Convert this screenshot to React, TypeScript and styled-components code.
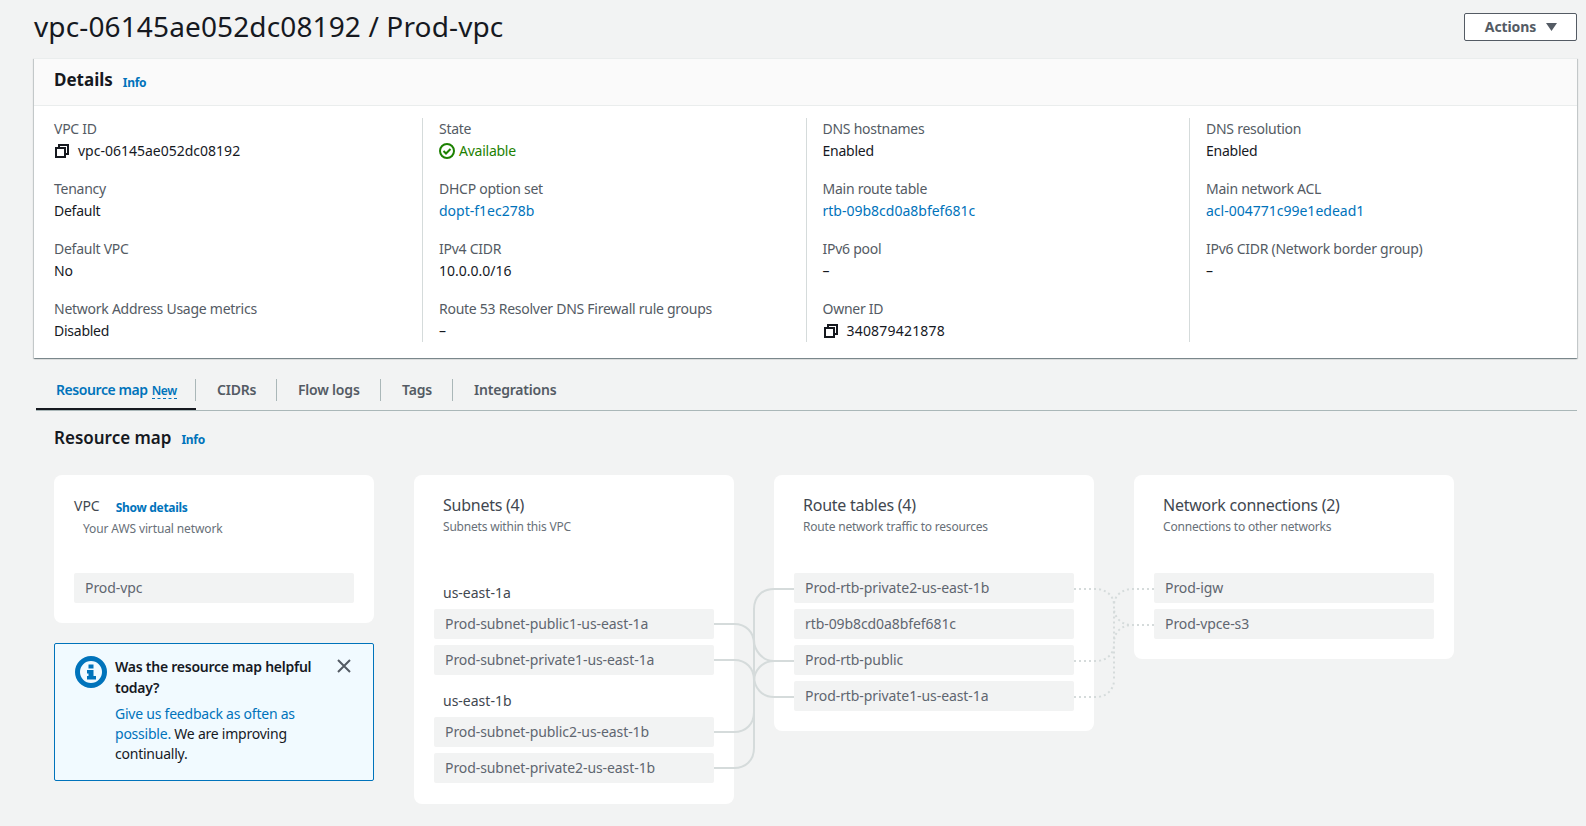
import React from "react";
import styled, { createGlobalStyle } from "styled-components";

const Global = createGlobalStyle`
  html, body { margin: 0; padding: 0; background: #f2f3f3; }
  body { font-family: "Noto Sans", "Open Sans", sans-serif; font-size: 14px; line-height: 22px; color: #16191f; overflow: hidden; }
  * { box-sizing: border-box; }
`;

const Page = styled.div`
  width: 1586px;
  height: 826px;
  padding: 0 9px 0 34px;
  overflow: hidden;
`;
const TopBar = styled.header`
  height: 58px;
  padding-top: 13px;
  display: flex;
  justify-content: space-between;
  align-items: flex-start;
`;
const Title = styled.h1`
  margin: -1px 0 0;
  font-size: 28px;
  line-height: 28px;
  font-weight: 400;
  letter-spacing: 0.13px;
  color: #16191f;
`;
const ActionButton = styled.button`
  width: 113px;
  height: 28px;
  padding: 0 0 0 1px;
  background: #fff;
  border: 1px solid #545b64;
  border-radius: 2px;
  color: #545b64;
  font: 700 14px/20px "Noto Sans", sans-serif;
  letter-spacing: -0.1px;
  display: flex;
  align-items: center;
  justify-content: center;
  gap: 10px;
`;
const Panel = styled.section`
  background: #fff;
  box-shadow: 0 1px 1px 0 rgba(0, 28, 36, 0.3), 1px 1px 1px 0 rgba(0, 28, 36, 0.15), -1px 1px 1px 0 rgba(0, 28, 36, 0.15);
  border-top: 1px solid #eaeded;
`;
const PanelHead = styled.div`
  height: 47px;
  padding: 0 20px;
  background: #fafafa;
  border-bottom: 1px solid #eaeded;
  display: flex;
  align-items: center;
  gap: 10px;
`;
const PanelTitle = styled.h2`
  margin: 0 0 5px;
  font-size: 17px;
  line-height: 22px;
  font-weight: 700;
`;
const Info = styled.a`
  font-size: 12px;
  font-weight: 700;
  line-height: 16px;
  letter-spacing: -0.3px;
  color: #0073bb;
  position: relative;
  top: 1px;
`;
const MapInfo = styled(Info)`
  top: 2px;
`;
const PanelBody = styled.div`
  padding: 12px 0 16px 20px;
  display: grid;
  grid-template-columns: 368px 383.5px 383.5px 1fr;
`;
const Column = styled.div<{ $first?: boolean }>`
  padding-left: ${(p) => (p.$first ? 0 : 16)}px;
  border-left: ${(p) => (p.$first ? "none" : "1px solid #d5dbdb")};
  display: flex;
  flex-direction: column;
  gap: 16px;
`;
const Pair = styled.div`
  height: 44px;
`;
const Label = styled.div`
  color: #545b64;
  height: 22px;
  letter-spacing: -0.26px;
  white-space: nowrap;
`;
const Value = styled.div`
  height: 22px;
  display: flex;
  align-items: center;
  gap: 8px;
  white-space: nowrap;
`;
const Word = styled.span`
  letter-spacing: -0.25px;
`;
const Digits = styled.span`
  letter-spacing: 0.2px;
`;
const Link = styled.a`
  color: #0073bb;
`;
const Status = styled.span`
  color: #1d8102;
  display: flex;
  align-items: center;
  gap: 4px;
  letter-spacing: -0.25px;
`;
const Tabs = styled.nav`
  margin: 14px 0 0 2px;
  height: 39px;
  border-bottom: 1px solid #aab7b8;
  display: flex;
  align-items: flex-start;
`;
const Tab = styled.div<{ $active?: boolean; $last?: boolean; $w: number }>`
  position: relative;
  flex: none;
  width: ${(p) => p.$w}px;
  height: 38px;
  padding: 7px 0 0 ${(p) => (p.$active ? 20 : 21)}px;
  font-weight: 600;
  letter-spacing: ${(p) => (p.$active ? -0.42 : -0.2)}px;
  color: ${(p) => (p.$active ? "#0073bb" : "#545b64")};
  white-space: nowrap;
  display: flex;
  gap: 4px;
  &::after {
    content: "";
    display: ${(p) => (p.$last ? "none" : "block")};
    position: absolute;
    right: 0;
    top: 7px;
    height: 22px;
    width: 1px;
    background: #aab7b8;
  }
  ${(p) => (p.$active ? "border-bottom: 2px solid #16191f;" : "")}
`;
const NewTag = styled.span`
  font-size: 12px;
  line-height: 16px;
  height: 16px;
  margin-top: 4px;
  border-bottom: 1px dashed #0073bb;
  color: #0073bb;
`;
const MapHead = styled.div`
  margin: 16px 0 0 20px;
  height: 22px;
  display: flex;
  align-items: center;
  gap: 10px;
`;
const MapTitle = styled.h2`
  margin: 0;
  font-size: 17px;
  line-height: 22px;
  font-weight: 600;
`;
const MapArea = styled.div`
  position: relative;
  margin: 26px 0 0 20px;
  display: flex;
  align-items: flex-start;
  gap: 40px;
`;
const Stack = styled.div`
  width: 320px;
  display: flex;
  flex-direction: column;
  gap: 20px;
`;
const Card = styled.div<{ $h: number }>`
  width: 320px;
  height: ${(p) => p.$h}px;
  padding: 98px 20px 0;
  background: #fff;
  border-radius: 8px;
  position: relative;
  display: flex;
  flex-direction: column;
  gap: 6px;
`;
const CardHead = styled.div`
  position: absolute;
  left: 29px;
  top: 19px;
`;
const VpcHead = styled.div`
  position: absolute;
  left: 20px;
  top: 20px;
`;
const CardTitle = styled.div`
  font-size: 16px;
  line-height: 22px;
  letter-spacing: -0.25px;
  color: #414750;
`;
const CardSub = styled.div`
  margin-top: 2px;
  font-size: 12px;
  line-height: 18px;
  letter-spacing: -0.2px;
  color: #687078;
`;
const VpcTitleRow = styled.div`
  display: flex;
  gap: 16px;
  align-items: center;
  height: 22px;
  font-size: 14px;
  color: #414750;
`;
const ShowDetails = styled.a`
  margin-top: 3px;
  font-size: 12px;
  font-weight: 700;
  letter-spacing: -0.3px;
  color: #0073bb;
`;
const VpcSub = styled.div`
  font-size: 12px;
  line-height: 18px;
  letter-spacing: -0.12px;
  color: #687078;
  margin: 3px 0 0 9px;
`;
const Item = styled.div`
  height: 30px;
  padding: 0 11px;
  display: flex;
  align-items: center;
  background: #f2f3f3;
  border-radius: 2px;
  color: #5f6670;
  letter-spacing: -0.08px;
  white-space: nowrap;
  flex: none;
`;
const Zone = styled.div`
  height: 30px;
  padding: 9px 0 0 9px;
  display: flex;
  align-items: center;
  color: #414750;
  flex: none;
`;
const Alert = styled.div`
  width: 320px;
  height: 138px;
  background: #f1faff;
  border: 1px solid #0073bb;
  border-radius: 2px;
  padding: 12px 0 0 20px;
  display: flex;
  align-items: flex-start;
  position: relative;
`;
const AlertText = styled.div`
  margin-left: 8px;
  width: 210px;
`;
const AlertTitle = styled.div`
  font-weight: 600;
  line-height: 21px;
  letter-spacing: -0.25px;
  margin-bottom: 6px;
`;
const AlertBody = styled.div`
  line-height: 20px;
  letter-spacing: -0.23px;
`;
const CloseBtn = styled.button`
  position: absolute;
  top: 14px;
  right: 21px;
  padding: 0;
  width: 16px;
  height: 16px;
  background: none;
  border: none;
  display: flex;
`;
const Wires = styled.svg`
  position: absolute;
  left: 0;
  top: 0;
  pointer-events: none;
`;

const CopyIcon = () => (
  <svg width="16" height="16" viewBox="0 0 16 16" fill="none" stroke="#16191f" strokeWidth="2">
    <rect x="2" y="5" width="9" height="9" />
    <path d="M5 5V2h9v9h-3" />
  </svg>
);
const CheckIcon = () => (
  <svg width="16" height="16" viewBox="0 0 16 16" fill="none" stroke="#1d8102" strokeWidth="2">
    <circle cx="8" cy="8" r="7" />
    <path d="M4.5 8l2.5 2.5 4.5-4.5" />
  </svg>
);
const InfoIcon = () => (
  <svg width="32" height="32" viewBox="0 0 32 32" style={{ flex: "none" }}>
    <circle cx="16" cy="16" r="13.5" fill="none" stroke="#0073bb" strokeWidth="5" />
    <rect x="13.5" y="8.5" width="5" height="4" fill="#0073bb" />
    <path d="M12 14h6.5v6H21v3.5h-9V20h1.5v-2.5H12z" fill="#0073bb" />
  </svg>
);
const CloseIcon = () => (
  <svg width="16" height="16" viewBox="0 0 16 16" fill="none" stroke="#545b64" strokeWidth="2">
    <path d="M2 2l12 12M14 2L2 14" />
  </svg>
);
const Caret = () => (
  <svg width="11" height="8" viewBox="0 0 11 8" fill="#545b64">
    <path d="M0 0h11L5.5 8z" />
  </svg>
);

type Cell = { label: string; value: React.ReactNode };
const columns: Cell[][] = [
  [
    { label: "VPC ID", value: <><CopyIcon />vpc-06145ae052dc08192</> },
    { label: "Tenancy", value: <Word>Default</Word> },
    { label: "Default VPC", value: <Word>No</Word> },
    { label: "Network Address Usage metrics", value: <Word>Disabled</Word> },
  ],
  [
    { label: "State", value: <Status><CheckIcon />Available</Status> },
    { label: "DHCP option set", value: <Link>dopt-f1ec278b</Link> },
    { label: "IPv4 CIDR", value: "10.0.0.0/16" },
    { label: "Route 53 Resolver DNS Firewall rule groups", value: "–" },
  ],
  [
    { label: "DNS hostnames", value: <Word>Enabled</Word> },
    { label: "Main route table", value: <Link>rtb-09b8cd0a8bfef681c</Link> },
    { label: "IPv6 pool", value: "–" },
    { label: "Owner ID", value: <><CopyIcon /><Digits>340879421878</Digits></> },
  ],
  [
    { label: "DNS resolution", value: <Word>Enabled</Word> },
    { label: "Main network ACL", value: <Link>acl-004771c99e1edead1</Link> },
    { label: "IPv6 CIDR (Network border group)", value: "–" },
  ],
];

const solid = [
  "M714 624H734C746 624 754 632 754 644",
  "M714 660H734C746 660 754 668 754 680",
  "M714 732H734C746 732 754 724 754 712",
  "M714 768H734C746 768 754 760 754 748V609C754 597 762 589 774 589H794",
  "M754 640C754 650 762 661 774 661H794",
  "M754 681C754 671 762 661 774 661",
  "M754 676C754 688 762 697 774 697H794",
];
const dotted = [
  "M1074 589H1096C1106 589 1114 596 1114 605",
  "M1154 589H1132C1122 589 1114 596 1114 605V680",
  "M1154 625H1132C1122 625 1114 618 1114 608",
  "M1154 625H1132C1122 625 1114 632 1114 642",
  "M1074 661H1096C1106 661 1114 654 1114 645",
  "M1074 697H1096C1106 697 1114 690 1114 680",
];

export default function App() {
  return (
    <Page>
      <Global />
      <TopBar>
        <Title>vpc-06145ae052dc08192 / Prod-vpc</Title>
        <ActionButton>Actions<Caret /></ActionButton>
      </TopBar>
      <Panel>
        <PanelHead>
          <PanelTitle>Details</PanelTitle>
          <Info>Info</Info>
        </PanelHead>
        <PanelBody>
          {columns.map((col, i) => (
            <Column key={i} $first={i === 0}>
              {col.map((c) => (
                <Pair key={c.label}>
                  <Label>{c.label}</Label>
                  <Value>{c.value}</Value>
                </Pair>
              ))}
            </Column>
          ))}
        </PanelBody>
      </Panel>
      <Tabs>
        <Tab $active $w={160}>Resource map <NewTag>New</NewTag></Tab>
        <Tab $w={81}>CIDRs</Tab>
        <Tab $w={104}>Flow logs</Tab>
        <Tab $w={72}>Tags</Tab>
        <Tab $last $w={110}>Integrations</Tab>
      </Tabs>
      <MapHead>
        <MapTitle>Resource map</MapTitle>
        <MapInfo>Info</MapInfo>
      </MapHead>
      <MapArea>
        <Stack>
          <Card $h={148}>
            <VpcHead>
              <VpcTitleRow>VPC <ShowDetails>Show details</ShowDetails></VpcTitleRow>
              <VpcSub>Your AWS virtual network</VpcSub>
            </VpcHead>
            <Item>Prod-vpc</Item>
          </Card>
          <Alert>
            <InfoIcon />
            <AlertText>
              <AlertTitle>Was the resource map helpful today?</AlertTitle>
              <AlertBody>
                <Link>Give us feedback as often as</Link>
                <br />
                <Link>possible.</Link> We are improving
                <br />
                continually.
              </AlertBody>
            </AlertText>
            <CloseBtn><CloseIcon /></CloseBtn>
          </Alert>
        </Stack>
        <Card $h={329}>
          <CardHead>
            <CardTitle>Subnets (4)</CardTitle>
            <CardSub>Subnets within this VPC</CardSub>
          </CardHead>
          <Zone>us-east-1a</Zone>
          <Item>Prod-subnet-public1-us-east-1a</Item>
          <Item>Prod-subnet-private1-us-east-1a</Item>
          <Zone>us-east-1b</Zone>
          <Item>Prod-subnet-public2-us-east-1b</Item>
          <Item>Prod-subnet-private2-us-east-1b</Item>
        </Card>
        <Card $h={256}>
          <CardHead>
            <CardTitle>Route tables (4)</CardTitle>
            <CardSub>Route network traffic to resources</CardSub>
          </CardHead>
          <Item>Prod-rtb-private2-us-east-1b</Item>
          <Item>rtb-09b8cd0a8bfef681c</Item>
          <Item>Prod-rtb-public</Item>
          <Item>Prod-rtb-private1-us-east-1a</Item>
        </Card>
        <Card $h={184}>
          <CardHead>
            <CardTitle>Network connections (2)</CardTitle>
            <CardSub>Connections to other networks</CardSub>
          </CardHead>
          <Item>Prod-igw</Item>
          <Item>Prod-vpce-s3</Item>
        </Card>
        <Wires width="1100" height="330" viewBox="54 475 1100 330" fill="none">
          <g stroke="#d5dbdb" strokeWidth="2">
            {solid.map((d) => <path key={d} d={d} />)}
          </g>
          <g stroke="#d5dbdb" strokeWidth="2" strokeDasharray="2 3">
            {dotted.map((d) => <path key={d} d={d} />)}
          </g>
        </Wires>
      </MapArea>
    </Page>
  );
}
